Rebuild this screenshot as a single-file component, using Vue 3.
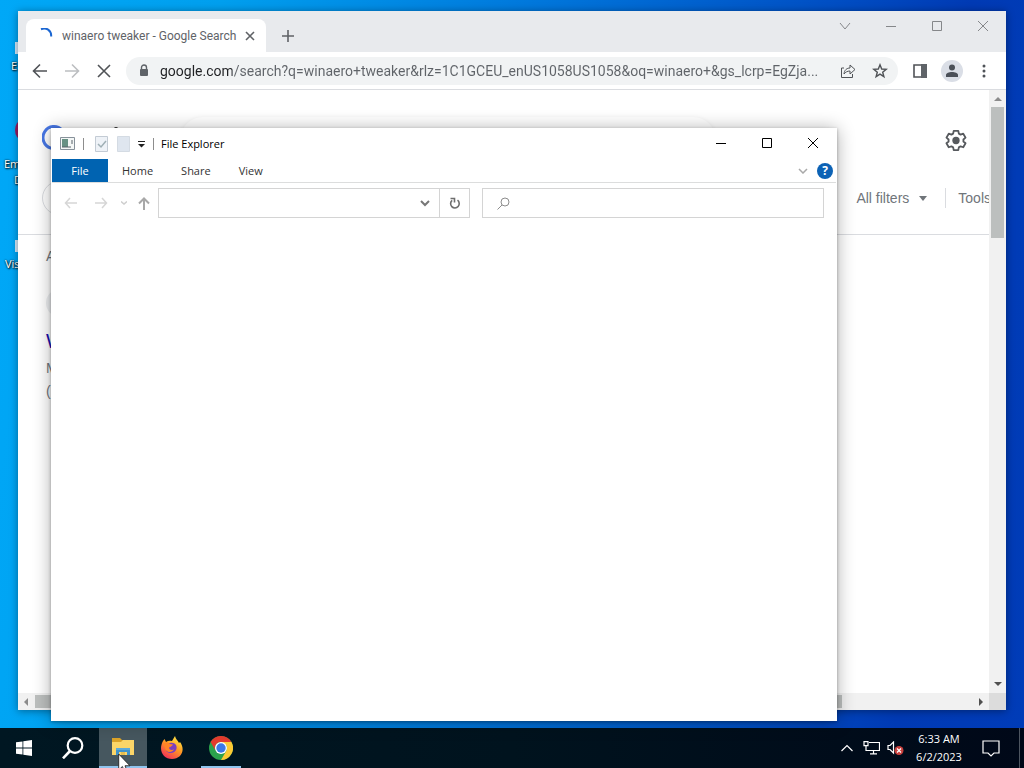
<template>
    <div class="screen">
        <main class="desktop">
            <div v-for="item in shortcuts" :key="item.label" class="shortcut" :class="item.id">
                <span class="shortcut-icon"></span>
                <span class="shortcut-label">{{ item.label }}</span>
                <span v-if="item.second" class="shortcut-label second">{{ item.second }}</span>
            </div>

            <section class="browser" aria-label="Google Chrome">
                <div class="tab-strip">
                    <div class="tab">
                        <svg class="spinner" width="16" height="16" viewBox="0 0 16 16">
                            <path d="M3 1.200C8-.8 13.500 2 13.200 8.500" fill="none" stroke="#1a66d2" stroke-width="2" />
                        </svg>
                        <span class="tab-title">winaero tweaker - Google Search</span>
                        <button class="tab-close" aria-label="Close tab">
                            <svg width="10" height="10" viewBox="0 0 10 10"><path d="M1 1l8 8M9 1l-8 8" /></svg>
                        </button>
                    </div>
                    <button class="new-tab" aria-label="New tab">
                        <svg width="12" height="12" viewBox="0 0 12 12"><path d="M6 0v12M0 6h12" /></svg>
                    </button>
                    <div class="controls">
                        <button v-for="c in browserControls" :key="c.name" :aria-label="c.name">
                            <svg width="12" height="12" viewBox="0 0 12 12"><path :d="c.path" /></svg>
                        </button>
                    </div>
                </div>

                <div class="toolbar">
                    <button v-for="n in browserNav" :key="n.name" class="tool" :class="{ faded: n.faded }" :aria-label="n.name">
                        <svg width="16" height="16" viewBox="0 0 16 16"><path :d="n.path" /></svg>
                    </button>
                    <div class="omnibox">
                        <span class="tool">
                            <svg width="10" height="14" viewBox="0 0 10 14">
                                <path d="M2.500 6V3.500a2.500 2.500 0 0 1 5 0V6" fill="none" stroke="#5f6368" stroke-width="1.400" />
                                <rect x="1" y="5" width="8" height="7" rx="1" fill="#5f6368" />
                            </svg>
                        </span>
                        <input v-model="url" class="url" type="text" aria-label="Address and search bar" spellcheck="false">
                        <button class="tool" aria-label="Share this page">
                            <svg class="thin" width="16" height="16" viewBox="0 0 16 16">
                                <path d="M4 5H1.500v9.500h11V11M4 11c.4-4 2.800-6 6-6V2l5 4.500-5 4.500V8C7.500 8 5.500 9 4 11z" />
                            </svg>
                        </button>
                        <button class="tool" aria-label="Bookmark this tab">
                            <svg class="thin" width="16" height="16" viewBox="0 0 16 16">
                                <path d="M8 1.800l1.700 4.200 4.500.3-3.500 2.900 1.200 4.500L8 11.200l-3.900 2.500 1.200-4.500-3.500-2.900 4.500-.3z" stroke-width="1.400" />
                            </svg>
                        </button>
                    </div>
                    <button class="tool" aria-label="Side panel">
                        <svg width="14" height="14" viewBox="0 0 14 14">
                            <path d="M1 1h12v12H1z" />
                            <rect x="8" y="0" width="6" height="14" fill="#5f6368" />
                        </svg>
                    </button>
                    <button class="tool" aria-label="Profile">
                        <svg width="22" height="22" viewBox="0 0 22 22">
                            <circle cx="11" cy="11" r="11" fill="#dadee6" />
                            <circle cx="11" cy="7.500" r="3" fill="#4b5058" />
                            <path d="M5 17v-2c0-4 12-4 12 0v2z" fill="#4b5058" stroke="none" />
                        </svg>
                    </button>
                    <button class="tool" aria-label="Menu">
                        <svg width="4" height="16" viewBox="0 0 4 16">
                            <circle v-for="y in [3, 8, 13]" :key="y" cx="2" :cy="y" r="1.500" fill="#4f5358" />
                        </svg>
                    </button>
                </div>

                <div class="viewport">
                    <div class="page">
                        <header class="page-head">
                            <svg class="logo" width="92" height="30" viewBox="0 0 92 30">
                                <path d="M20 5A11 11 0 1 0 23 13H12" fill="none" stroke="#4777e6" stroke-width="3" />
                                <path d="M74 2v22" stroke="#444" stroke-width="3" />
                            </svg>
                            <div class="query"></div>
                            <button class="gear" aria-label="Settings">
                                <svg width="22" height="22" viewBox="0 0 24 24">
                                    <path d="M9.500 2h5l.6 3 1.900 1.100 2.900-1 2.500 4.300-2.300 2v2.200l2.300 2-2.500 4.300-2.900-1-1.900 1.100-.6 3h-5l-.6-3L7 18.900l-2.900 1-2.500-4.300 2.300-2v-2.200l-2.300-2 2.500-4.300 2.900 1L8.900 5z" fill="none" stroke="#56595d" stroke-width="2" stroke-linejoin="round" />
                                    <circle cx="12" cy="12.500" r="4" fill="#56595d" />
                                </svg>
                            </button>
                        </header>
                        <nav class="filters">
                            <span class="chip"></span>
                            <button class="filter">All filters <i class="caret"></i></button>
                            <button class="filter tools">Tools</button>
                        </nav>
                        <div class="results">
                            <p class="stats">A</p>
                            <span class="favicon"></span>
                            <a class="result-title" href="#">W</a>
                            <p>M</p>
                            <p>(</p>
                        </div>
                    </div>
                    <div class="scroll-y"><i class="arrow up"></i><div class="track"><div class="thumb" :style="{ height: scroll.y + '%' }"></div></div><i class="arrow down"></i></div>
                    <div class="scroll-x"><i class="arrow left"></i><div class="track"><div class="thumb" :style="{ width: scroll.x + '%' }"></div></div><i class="arrow right"></i></div>
                    <div class="corner"></div>
                </div>
            </section>

            <section class="explorer" aria-label="File Explorer">
                <header class="title-bar">
                    <svg class="app-icon" width="15" height="13" viewBox="0 0 15 13">
                        <path d="M.5.5h14v12H.5z" fill="#f4f7f6" stroke="#87919a" />
                        <path d="M2 2h6v8H2z" fill="#679184" />
                        <path d="M2 10h9M12 3v4" stroke="#59636a" />
                    </svg>
                    <i class="divider"></i>
                    <svg class="doc" width="13" height="16" viewBox="0 0 13 16">
                        <path d="M.5.5h12v15H.5z" fill="#eef2f7" stroke="#c3cbd4" />
                        <path d="M3 8l3 3 5-6" fill="none" stroke="#9fafb5" stroke-width="1.500" />
                    </svg>
                    <svg class="doc" width="13" height="16" viewBox="0 0 13 16">
                        <path d="M.5.5h12v15H.5z" fill="#dfe6ef" stroke="#d4dbe3" />
                    </svg>
                    <svg class="quick" width="9" height="8" viewBox="0 0 9 8">
                        <path d="M1 1.500h7" stroke="#222" />
                        <path d="M1 4h7L4.500 7.500z" fill="#222" />
                    </svg>
                    <i class="divider"></i>
                    <h1>File Explorer</h1>
                    <div class="controls dark">
                        <button v-for="c in explorerControls" :key="c.name" :aria-label="c.name">
                            <svg width="12" height="12" viewBox="0 0 12 12"><path :d="c.path" /></svg>
                        </button>
                    </div>
                </header>
                <nav class="ribbon">
                    <button v-for="tab in tabs" :key="tab" :class="{ file: tab === 'File' }">{{ tab }}</button>
                    <button class="expand" aria-label="Expand the Ribbon">
                        <svg width="10" height="6" viewBox="0 0 10 6"><path d="M1 1l4 4 4-4" fill="none" stroke="#a9a9a9" stroke-width="1.500" /></svg>
                    </button>
                    <button class="help" aria-label="Help">?</button>
                </nav>
                <div class="address-row">
                    <button class="nav" aria-label="Back"><svg width="14" height="12" viewBox="0 0 14 12"><path d="M13 6H2M6 1L1.500 6 6 11" stroke="#d6d6d6" /></svg></button>
                    <button class="nav" aria-label="Forward"><svg width="14" height="12" viewBox="0 0 14 12"><path d="M1 6h11M8 1l4.500 5L8 11" stroke="#d6d6d6" /></svg></button>
                    <button class="nav recent" aria-label="Recent locations"><svg width="6" height="4" viewBox="0 0 6 4"><path d="M0 .5l3 2.500L6 .5" stroke="#cfcfcf" /></svg></button>
                    <button class="nav parent" aria-label="Up"><svg width="12" height="13" viewBox="0 0 12 13"><path d="M6 13V2M1 6.500l5-5 5 5" stroke="#a8a8a8" stroke-width="2" /></svg></button>
                    <div class="address">
                        <input v-model="path" type="text" aria-label="Address">
                        <button class="drop" aria-label="Previous locations"><svg width="10" height="7" viewBox="0 0 10 7"><path d="M1 1l4 4 4-4" fill="none" stroke="#777" stroke-width="2" /></svg></button>
                        <button class="refresh" aria-label="Refresh">
                            <svg width="12" height="13" viewBox="0 0 12 13"><path d="M8.500 3.200A4.300 4.300 0 1 1 3.200 3.300M1.500 1.500h4v4" fill="none" stroke="#6e6e6e" stroke-width="1.600" /></svg>
                        </button>
                    </div>
                    <div class="search">
                        <svg width="13" height="13" viewBox="0 0 13 13"><circle cx="8" cy="5" r="4" /><path d="M5 8l-4.500 4.500" /></svg>
                        <input v-model="search" type="text" aria-label="Search">
                    </div>
                </div>
            </section>
        </main>

        <footer class="taskbar">
            <button class="task" aria-label="Start">
                <svg width="16" height="16" viewBox="0 0 16 16"><path d="M0 2.300l6.500-.9v6.100H0zM7.300 1.300L16 0v7.500H7.300zM0 8.400h6.500v6.200L0 13.700zM7.300 8.400H16V16l-8.700-1.300z" fill="#fff" /></svg>
            </button>
            <button class="task" aria-label="Search">
                <svg width="22" height="22" viewBox="0 0 22 22" stroke="#fff" stroke-width="2.200"><circle cx="13" cy="8.500" r="7.300" /><path d="M8 14l-7 7.300" stroke-width="2.600" /></svg>
            </button>
            <button class="task active" aria-label="File Explorer">
                <svg width="22" height="20" viewBox="0 0 22 20">
                    <path d="M0 1h8l2 2h11v5H0z" fill="#dba329" />
                    <path d="M0 5h9l2-2h11v15H0z" fill="#fbd568" />
                    <path d="M4 18v-7h14v7h-3v-3H7v3z" fill="#3f92c9" />
                    <path d="M4 11h14v2H4z" fill="#5daad9" />
                    <path d="M9 15h4v3H9z" fill="#e6bd4f" />
                </svg>
            </button>
            <button class="task" aria-label="Firefox">
                <svg width="24" height="24" viewBox="0 0 24 24">
                    <defs>
                        <linearGradient id="fox" x1=".8" y1="0" x2=".2" y2="1">
                            <stop offset="0" stop-color="#fff04a" />
                            <stop offset=".45" stop-color="#ff9a23" />
                            <stop offset="1" stop-color="#f3285c" />
                        </linearGradient>
                    </defs>
                    <path d="M3 5l1.500-2 1.500 3c2-1.500 4-1.600 6-1L15 0c.5 3 3 4.500 4 7l1-1c6 8 1 17-8 17C3 23-2 14 3 5z" fill="url(#fox)" />
                    <path d="M7 9c2-3 7-3 9 0 2 4-1 8-5 8-3 0-6-2-5-5l4-1 2-2z" fill="#7b3fc0" />
                    <path d="M3 8c2-2 5-2 7 0l3 .5c-1 2-3 2-4 3 0 2 2 3 5 2-2 4-9 3-9-2z" fill="#ff8426" />
                </svg>
            </button>
            <button class="task open" aria-label="Google Chrome">
                <svg width="24" height="24" viewBox="0 0 24 24">
                    <circle cx="12" cy="12" r="12" fill="#2ba24c" />
                    <path d="M1.600 6A12 12 0 0 1 22.400 6H12a6 6 0 0 0-5.200 9z" fill="#e33b2e" />
                    <path d="M22.400 6A12 12 0 0 1 12 24l5.200-9A6 6 0 0 0 17.200 9L12 6z" fill="#fcc934" />
                    <circle cx="12" cy="12" r="6" fill="#fff" />
                    <circle cx="12" cy="12" r="4.700" fill="#3b78e7" />
                </svg>
            </button>

            <div class="tray">
                <button aria-label="Show hidden icons"><svg width="12" height="8" viewBox="0 0 12 8"><path d="M.5 7L6 1.500 11.500 7" /></svg></button>
                <button aria-label="Network"><svg width="17" height="14" viewBox="0 0 17 14"><path d="M6 1.500h10.500v8H5M10.500 9.500v3M7 12.800h7M1 .7h4v4H1zM3 5v4.500h2" /></svg></button>
                <button aria-label="Volume">
                    <svg width="17" height="14" viewBox="0 0 17 14">
                        <path d="M1 4.500h2l3.500-3.500v11L3 8.500H1z" />
                        <circle cx="12" cy="9.500" r="4.500" fill="#c9403d" stroke="none" />
                        <path d="M10 7.500l4 4M14 7.500l-4 4" />
                    </svg>
                </button>
                <button class="clock"><span>6:33 AM</span><span>6/2/2023</span></button>
                <button class="notifications" aria-label="Notifications"><svg width="18" height="17" viewBox="0 0 18 17"><path d="M1 1h16v12h-5l-3 3-3-3H1z" /></svg></button>
                <i class="peek"></i>
            </div>
        </footer>

        <svg class="pointer" width="13" height="20" viewBox="0 0 13 20">
            <path d="M.7 1v16l3.700-3.500L7 19.500l2.500-1L7 12.800h5z" fill="#fff" stroke="#222" stroke-width=".9" />
        </svg>
    </div>
</template>

<script setup>
import { ref } from 'vue';

const url = ref('google.com/search?q=winaero+tweaker&rlz=1C1GCEU_enUS1058US1058&oq=winaero+&gs_lcrp=EgZja...');
const path = ref('');
const search = ref('');
const scroll = { x: 86, y: 23 };

const tabs = ['File', 'Home', 'Share', 'View'];

const shortcuts = [
    { id: 'edge', label: 'E' },
    { id: 'emsi', label: 'Em', second: 'D' },
    { id: 'visual', label: 'Vis' }
];

const explorerControls = [
    { name: 'Minimize', path: 'M1 6.500h10' },
    { name: 'Maximize', path: 'M1.500 1.500h9v9h-9z' },
    { name: 'Close', path: 'M1 1l10 10M11 1L1 11' }
];

const browserControls = [
    { name: 'Search tabs', path: 'M1 3l5 6 5-6' },
    ...explorerControls
];

const browserNav = [
    { name: 'Back', path: 'M15 8H2M8 1.500L1.500 8 8 14.500' },
    { name: 'Forward', path: 'M1 8h13M8 1.500L14.500 8 8 14.500', faded: true },
    { name: 'Stop', path: 'M2 2l12 12M14 2L2 14' }
];
</script>

<style>
body {
    margin: 0;
}
</style>

<style scoped>
.screen {
    position: relative;
    display: flex;
    flex-direction: column;
    height: 100vh;
    overflow: hidden;
    font-family: "Open Sans", "Noto Sans", sans-serif;
    font-size: 11px;
    background: linear-gradient(96deg, #00a8f7 0%, #009fee 20%, #0078dc 48%, #004fc4 75%, #003ab4 88%, #003cb8 100%);
}

button {
    display: flex;
    align-items: center;
    justify-content: center;
    padding: 0;
    border: 0;
    background: none;
    color: inherit;
    font: inherit;
}

input {
    min-width: 0;
    padding: 0;
    border: 0;
    outline: 0;
    background: none;
    font: inherit;
}

p,
h1 {
    margin: 0;
    font-size: inherit;
    font-weight: normal;
}

svg {
    flex: none;
    fill: none;
}

.desktop {
    position: relative;
    flex: 1;
    min-height: 0;
}

.shortcut {
    position: absolute;
    color: #fff;
    line-height: 16px;
    text-shadow: 1px 1px 2px #000, 0 0 2px #000;
}

.shortcut-icon {
    display: block;
    height: 12px;
    margin-bottom: 4px;
    border-left: 3px solid #d4e9fa;
}

.shortcut-label {
    display: block;
}

.edge {
    left: 11px;
    top: 42px;
}

.emsi {
    left: 4px;
    top: 120px;
}

.emsi .shortcut-icon {
    width: 14px;
    height: 20px;
    margin: 0 0 16px 11px;
    border: 0;
    border-radius: 50% 0 0 50%;
    background: #9b1c62;
}

.emsi .second {
    padding-left: 10px;
}

.visual {
    left: 5px;
    top: 240px;
}

.edge .shortcut-icon {
    margin-left: 4px;
}

.visual .shortcut-icon {
    margin-left: 10px;
}

.browser {
    position: absolute;
    inset: 11px 18px 18px;
    display: flex;
    flex-direction: column;
    background: #fff;
    font-family: Roboto, "Open Sans", sans-serif;
    box-shadow: 0 1px 8px rgba(0, 0, 0, 0.4);
}

.tab-strip {
    display: flex;
    align-items: flex-end;
    height: 41px;
    padding-left: 8px;
    background: #e8eaed;
}

.tab {
    display: flex;
    align-items: center;
    box-sizing: border-box;
    width: 240px;
    height: 33px;
    padding: 0 8px 0 12px;
    border-radius: 8px 8px 0 0;
    background: #fff;
}

.tab-title {
    flex: 1;
    min-width: 0;
    margin-left: 8px;
    color: #5f6368;
    font-size: 12px;
    white-space: nowrap;
}

.tab-close {
    width: 16px;
    height: 16px;
}

.tab-close svg,
.new-tab svg {
    stroke: #5f6266;
    stroke-width: 1.6;
}

.new-tab {
    width: 28px;
    height: 33px;
    margin-left: 8px;
}

.controls {
    display: flex;
    align-self: flex-start;
    margin-left: auto;
}

.controls button {
    width: 46px;
    height: 29px;
}

.controls svg {
    stroke: #85878a;
}

.controls.dark button {
    height: 30px;
}

.controls.dark svg {
    stroke: #000;
}

.toolbar {
    display: flex;
    align-items: center;
    height: 37px;
    padding: 0 6px;
    border-bottom: 1px solid #dadce0;
}

.tool {
    display: flex;
    align-items: center;
    justify-content: center;
    flex: none;
    width: 32px;
    height: 28px;
}

.tool svg {
    stroke: #505357;
    stroke-width: 1.6;
}

.tool circle,
.tool rect {
    stroke: none;
}

.tool .thin {
    stroke-width: 1;
}

.tool.faded svg {
    stroke: #bcbec1;
}

.omnibox {
    display: flex;
    align-items: center;
    flex: 1;
    min-width: 0;
    height: 28px;
    margin: 0 6px;
    padding: 0 2px;
    border-radius: 14px;
    background: #f1f3f4;
}

.url {
    flex: 1;
    height: 24px;
    color: transparent;
    font-size: 14px;
    background: linear-gradient(90deg, #202124 72px, #5f6368 72px);
    background-clip: text;
    -webkit-background-clip: text;
}

.viewport {
    display: grid;
    grid-template: minmax(0, 1fr) 17px / minmax(0, 1fr) 17px;
    flex: 1;
    min-height: 0;
}

.page {
    overflow: hidden;
    color: #70757a;
    font-family: "Liberation Sans", Arial, sans-serif;
    font-size: 14px;
}

.page-head {
    display: flex;
    align-items: center;
    height: 76px;
    padding: 12px 22px 0 24px;
}

.query {
    width: 536px;
    height: 46px;
    margin-left: 46px;
    border-radius: 24px;
    box-shadow: 0 1px 5px rgba(0, 0, 0, 0.08);
}

.gear {
    margin-left: auto;
}

.filters {
    display: flex;
    align-items: center;
    height: 40px;
    padding: 0 0 16px 24px;
    margin-right: -2px;
    border-bottom: 1px solid #dadce0;
}

.chip {
    width: 60px;
    height: 32px;
    margin-right: auto;
    border: 1px solid #dadce0;
    border-radius: 17px;
}

.caret {
    margin-left: 10px;
    border: 4px solid transparent;
    border-top: 5px solid #70757a;
    border-bottom: 0;
}

.tools {
    height: 20px;
    margin-left: 18px;
    padding-left: 12px;
    border-left: 1px solid #dadce0;
}

.results {
    padding: 10px 28px;
    line-height: 23px;
}

.favicon {
    display: block;
    width: 28px;
    height: 28px;
    margin-top: 21px;
    border-radius: 50%;
    background: #eceef0;
}

.result-title {
    display: block;
    margin-top: 11px;
    color: #1a0dab;
    font-size: 20px;
    line-height: 26px;
    text-decoration: none;
}

.results .result-title + p {
    margin-top: 3px;
}

.scroll-y,
.scroll-x {
    display: flex;
    align-items: center;
    background: #f1f1f1;
}

.scroll-y {
    flex-direction: column;
}

.track {
    flex: 1;
}

.scroll-y .track {
    width: 13px;
}

.scroll-x .track {
    height: 13px;
}

.thumb {
    height: 100%;
    background: #bcbfbe;
}

.arrow {
    box-sizing: border-box;
    border: 4px solid transparent;
}

.arrow.up {
    margin: 3px 0 6px;
    border-bottom-color: #8b8b8b;
}

.arrow.down {
    margin: 6px 0 3px;
    border-top-color: #505050;
}

.arrow.left {
    margin: 0 7px 0 2px;
    border-right-color: #8b8b8b;
}

.arrow.right {
    margin: 0 2px 0 6px;
    border-left-color: #505050;
}

.corner {
    background: #dcdcdc;
}

.explorer {
    position: absolute;
    inset: 128px 187px 7px 51px;
    display: flex;
    flex-direction: column;
    border: solid #fff;
    border-width: 0 1px;
    background: #fff;
    box-shadow: 0 1px 3px rgba(0, 0, 0, 0.3), 0 1px 17px rgba(0, 0, 0, 0.32);
}

.title-bar {
    display: flex;
    align-items: center;
    height: 31px;
    padding-left: 8px;
}

.divider {
    width: 1px;
    height: 12px;
    margin: 0 11px 0 8px;
    background: #8d8d8d;
}

.doc {
    margin-right: 9px;
}

.quick {
    margin-left: -2px;
}

.title-bar .quick + .divider {
    margin: 0 7px;
}

.ribbon {
    display: flex;
    align-items: center;
    height: 23px;
    border-bottom: 1px solid #dcdddd;
    color: #333;
}

.ribbon button {
    height: 23px;
    padding: 0 14px;
}

.ribbon .file {
    width: 56px;
    background: #0063b1;
    color: #fff;
}

.ribbon .expand {
    margin-left: auto;
    padding: 0 8px;
}

.ribbon .help {
    width: 16px;
    height: 16px;
    margin: 0 3px 0 1px;
    padding: 0;
    border-radius: 50%;
    background: #0c62b5;
    color: #fff;
    font-size: 12px;
    font-weight: 700;
}

.address-row {
    display: flex;
    align-items: center;
    padding: 5px 12px 0 4px;
}

.nav {
    flex: none;
    width: 30px;
    height: 30px;
}

.nav svg {
    stroke-width: 1.5;
}

.nav.recent {
    width: 16px;
}

.nav.parent {
    width: 24px;
    margin-right: 2px;
}

.address,
.search {
    display: flex;
    align-items: center;
    box-sizing: border-box;
    min-width: 0;
    height: 30px;
    border: 1px solid #d4d4d4;
}

.address {
    flex: 1;
    margin-right: 12px;
}

.address input,
.search input {
    flex: 1;
}

.drop {
    width: 28px;
    height: 28px;
}

.refresh {
    width: 30px;
    height: 28px;
    border-left: 1px solid #d4d4d4;
}

.search {
    flex: 0 1 342px;
    padding-left: 14px;
}

.search svg {
    stroke: #8c8c8c;
}

.taskbar {
    display: flex;
    height: 40px;
    background: linear-gradient(90deg, #001722, #00131e 50%, #000818);
    color: #fff;
}

.task {
    box-sizing: border-box;
    width: 48px;
    height: 40px;
    margin-right: 1px;
}

.task.active {
    margin-left: 1px;
    border-bottom: 2px solid #8fc4ee;
    background: #46575f;
}

.task.open {
    background: linear-gradient(#8fc4ee, #8fc4ee) 50% 100% / 40px 2px no-repeat;
}

.tray {
    display: flex;
    align-items: center;
    margin-left: auto;
}

.tray button {
    width: 24px;
    height: 40px;
}

.tray svg {
    stroke: #fff;
    stroke-width: 1.2;
}

.tray .clock {
    flex-direction: column;
    width: 64px;
    line-height: 18px;
}

.tray .notifications {
    width: 40px;
}

.peek {
    width: 1px;
    height: 40px;
    margin: 0 4px 0 8px;
    background: #4d5560;
}

.pointer {
    position: absolute;
    left: 118px;
    bottom: -5px;
}
</style>
